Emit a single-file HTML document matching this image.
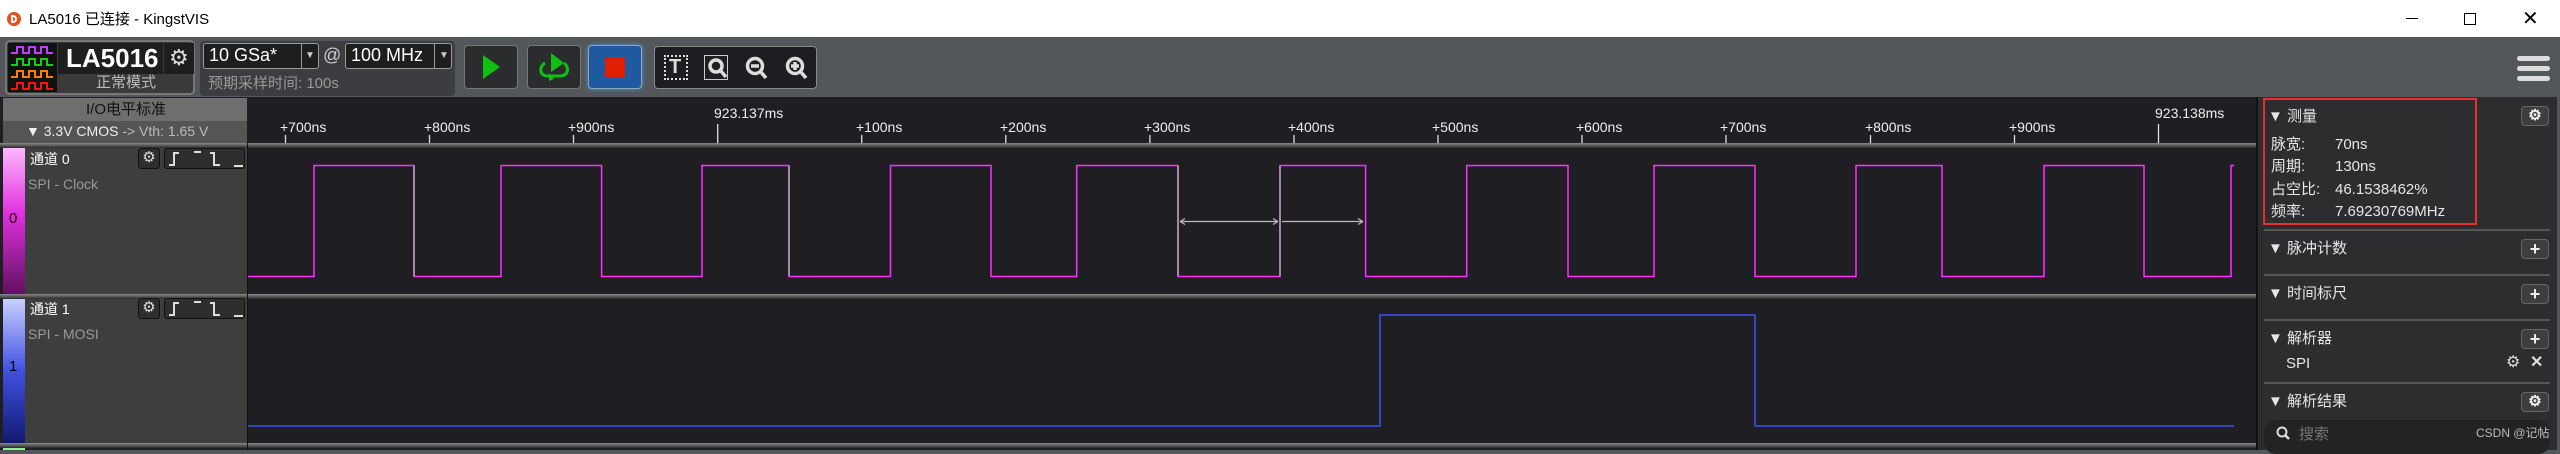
<!DOCTYPE html>
<html><head><meta charset="utf-8"><style>
*{margin:0;padding:0;box-sizing:border-box}
body{width:2560px;height:450px;overflow:hidden;background:#53575c;font-family:"Liberation Sans","Noto Sans CJK SC",sans-serif;position:relative;color:#ddd}
.a{position:absolute}
.t{position:absolute;white-space:nowrap;line-height:1.15}
.btn{position:absolute;border:1px solid #777;border-radius:4px;background:#2a2c2e}
.sep{position:absolute;height:5px;background:linear-gradient(#8a8a8a,#5a5a5a,#2a2a2a)}
.rp{font-size:15px;color:#e6e6e6}
.sq{position:absolute;width:28px;height:20px;border:1px solid #666;border-radius:4px;background:#3c3e40;color:#eee;font-size:18px;line-height:18px;text-align:center;font-weight:bold}
</style></head><body>
<!-- title bar -->
<div class="a" style="left:0;top:0;width:2560px;height:37px;background:#fff"></div>
<div class="a" style="left:7px;top:12px;width:14px;height:14px;border-radius:50%;background:#e8501e"></div>
<div class="a" style="left:11px;top:15px;width:6px;height:8px;border:2px solid #fff;border-radius:0 4px 4px 0"></div>
<div class="t" style="left:29px;top:11px;font-size:15px;color:#000">LA5016 已连接 - KingstVIS</div>
<div class="a" style="left:2406px;top:18px;width:12px;height:1px;background:#000"></div>
<div class="a" style="left:2464px;top:13px;width:12px;height:12px;border:1px solid #000"></div>
<div class="t" style="left:2522px;top:8px;font-size:20px;color:#000">✕</div>
<!-- toolbar -->
<div class="a" style="left:5px;top:40px;width:190px;height:55px;border:2px solid #777;border-radius:5px;background:#3a3a3a"></div>
<div class="a" style="left:8px;top:43px;width:49px;height:49px;background:#111"></div>
<svg class="a" style="left:8px;top:43px" width="49" height="49"><g fill="none" stroke-width="2">
<path d="M3 10H9V4H15V10H21V4H27V10H33V4H39V10H45" stroke="#c040ff"/>
<path d="M3 22H9V16H15V22H21V16H27V22H33V16H39V22H45" stroke="#10d010"/>
<path d="M3 34H9V28H15V34H21V28H27V34H33V28H39V34H45" stroke="#ff8000"/>
<path d="M3 46H9V40H15V46H21V40H27V46H33V40H39V46H45" stroke="#ff1010"/></g></svg>
<div class="a" style="left:58px;top:43px;width:105px;height:31px;background:#1e1e1e"></div>
<div class="t" style="left:66px;top:44px;font-size:26px;font-weight:bold;color:#fff">LA5016</div>
<div class="a" style="left:164px;top:43px;width:30px;height:31px;background:#1e1e1e"></div>
<div class="t" style="left:169px;top:45px;font-size:22px;color:#ddd">⚙</div>
<div class="t" style="left:96px;top:74px;font-size:15px;color:#bbb">正常模式</div>
<div class="a" style="left:200px;top:41px;width:255px;height:55px;background:#3b3d40;border-radius:4px"></div>
<div class="a" style="left:203px;top:43px;width:116px;height:26px;background:#1e1e1e;border:1px solid #999;border-radius:3px"></div>
<div class="t" style="left:209px;top:45px;font-size:18px;color:#fff">10 GSa*</div>
<div class="t" style="left:305px;top:50px;font-size:10px;color:#ccc">▼</div>
<div class="a" style="left:301px;top:44px;width:1px;height:24px;background:#999"></div>
<div class="t" style="left:323px;top:45px;font-size:18px;color:#ccc">@</div>
<div class="a" style="left:345px;top:43px;width:107px;height:26px;background:#1e1e1e;border:1px solid #999;border-radius:3px"></div>
<div class="t" style="left:351px;top:45px;font-size:18px;color:#fff">100 MHz</div>
<div class="t" style="left:439px;top:50px;font-size:10px;color:#ccc">▼</div>
<div class="a" style="left:434px;top:44px;width:1px;height:24px;background:#999"></div>
<div class="t" style="left:208px;top:75px;font-size:15px;color:#999">预期采样时间: 100s</div>
<div class="btn" style="left:464px;top:45px;width:54px;height:44px"></div>
<svg class="a" style="left:464px;top:45px" width="54" height="44"><path d="M19 10L36 22L19 34Z" fill="#10c010"/></svg>
<div class="btn" style="left:527px;top:45px;width:54px;height:44px"></div>
<svg class="a" style="left:527px;top:45px" width="54" height="44"><path d="M24 8L37 18L24 27Z" fill="#10c010"/><path d="M18 18C12 22 12 30 20 31H34C42 30 42 22 37 18" fill="none" stroke="#10c010" stroke-width="3"/><path d="M22 28L27 34L22 36Z" fill="#10c010"/></svg>
<div class="a" style="left:588px;top:45px;width:54px;height:44px;background:#1f5aa0;border:1px solid #8ab;border-radius:4px;box-shadow:0 0 5px #4a9ad8"></div>
<div class="a" style="left:605px;top:57px;width:20px;height:20px;background:#e01e00"></div>
<div class="a" style="left:654px;top:46px;width:163px;height:43px;background:#1e1e22;border:1px solid #888;border-radius:4px"></div>
<div class="a" style="left:664px;top:55px;width:24px;height:25px;border:2px dotted #ddd"></div>
<div class="t" style="left:669px;top:56px;font-size:20px;font-weight:bold;color:#ddd">T</div>
<div class="a" style="left:704px;top:55px;width:24px;height:25px;border:1px solid #ccc"></div>
<svg class="a" style="left:700px;top:52px" width="120" height="34"><g fill="none" stroke="#ddd" stroke-width="3.5"><circle cx="16" cy="14" r="6"/><path d="M20 18L26 25"/><circle cx="55" cy="14" r="7.5"/><path d="M60 19L66 26M51 14H59"/><circle cx="95" cy="14" r="7.5"/><path d="M100 19L106 26M91 14H99M95 10V18"/></g></svg>
<div class="a" style="left:2517px;top:56px;width:33px;height:5px;border-radius:3px;background:#ddd"></div>
<div class="a" style="left:2517px;top:66px;width:33px;height:5px;border-radius:3px;background:#ddd"></div>
<div class="a" style="left:2517px;top:76px;width:33px;height:5px;border-radius:3px;background:#ddd"></div>
<!-- main area -->
<div class="a" style="left:0;top:97px;width:2258px;height:353px;background:#1f1f23"></div>
<div class="a" style="left:3px;top:98px;width:244px;height:23px;background:#6e6e6e"></div>
<div class="t" style="left:86px;top:101px;font-size:15px;color:#111">I/O电平标准</div>
<div class="a" style="left:3px;top:121px;width:244px;height:22px;background:#555"></div>
<div class="t" style="left:26px;top:123px;font-size:14px;color:#eee">▼ 3.3V CMOS <span style="color:#bbb">-&gt; Vth: 1.65 V</span></div>
<div class="sep" style="left:0;top:143px;width:2258px"></div>
<!-- ruler -->
<svg class="a" style="left:0;top:98px" width="2258" height="46" font-family="Liberation Sans" font-size="14" fill="#eee">
<g stroke="#ddd" stroke-width="1.3">
<path d="M285.5 37V45M429.5 37V45M573.5 37V45M861.7 37V45M1005.8 37V45M1149.9 37V45M1294 37V45M1438 37V45M1582 37V45M1726 37V45M1870.5 37V45M2014.5 37V45M717.7 26V45M2158.5 26V45"/></g>
<text x="280" y="34">+700ns</text><text x="424" y="34">+800ns</text><text x="568" y="34">+900ns</text>
<text x="856" y="34">+100ns</text><text x="1000" y="34">+200ns</text><text x="1144" y="34">+300ns</text><text x="1288" y="34">+400ns</text><text x="1432" y="34">+500ns</text><text x="1576" y="34">+600ns</text><text x="1720" y="34">+700ns</text><text x="1865" y="34">+800ns</text><text x="2009" y="34">+900ns</text>
<text x="714" y="20">923.137ms</text><text x="2155" y="20">923.138ms</text>
</svg>
<!-- channel 0 -->
<div class="a" style="left:3px;top:148px;width:22px;height:146px;background:linear-gradient(#fcb8fc,#e030e0 45%,#601060)"></div>
<div class="t" style="left:9px;top:210px;font-size:15px;color:#300">0</div>
<div class="a" style="left:25px;top:148px;width:222px;height:146px;background:#3e3e3e"></div>
<div class="t" style="left:30px;top:151px;font-size:14px;color:#fff">通道 0</div>
<div class="t" style="left:28px;top:176px;font-size:14px;color:#999">SPI - Clock</div>
<div class="a" style="left:138px;top:148px;width:22px;height:21px;border:1px solid #111;border-radius:3px;background:#2e2e2e;color:#ddd;font-size:15px;text-align:center;line-height:18px">⚙</div>
<div class="a" style="left:164px;top:148px;width:81px;height:21px;border:1px solid #111;border-radius:3px;background:#2e2e2e"></div>
<svg class="a" style="left:164px;top:148px" width="81" height="21"><g fill="none" stroke="#ddd" stroke-width="2"><path d="M5 17H10V5H15M30 4H37M46 5H50V17H56M70 18H79"/></g></svg>
<div class="sep" style="left:0;top:294px;width:2258px"></div>
<!-- channel 1 -->
<div class="a" style="left:3px;top:299px;width:22px;height:145px;background:linear-gradient(#c8d0ff,#4050e0 50%,#101a70)"></div>
<div class="t" style="left:9px;top:358px;font-size:15px;color:#002">1</div>
<div class="a" style="left:25px;top:299px;width:222px;height:145px;background:#3e3e3e"></div>
<div class="t" style="left:30px;top:301px;font-size:14px;color:#fff">通道 1</div>
<div class="t" style="left:28px;top:326px;font-size:14px;color:#999">SPI - MOSI</div>
<div class="a" style="left:138px;top:298px;width:22px;height:21px;border:1px solid #111;border-radius:3px;background:#2e2e2e;color:#ddd;font-size:15px;text-align:center;line-height:18px">⚙</div>
<div class="a" style="left:164px;top:298px;width:81px;height:21px;border:1px solid #111;border-radius:3px;background:#2e2e2e"></div>
<svg class="a" style="left:164px;top:298px" width="81" height="21"><g fill="none" stroke="#ddd" stroke-width="2"><path d="M5 17H10V5H15M30 4H37M46 5H50V17H56M70 18H79"/></g></svg>
<div class="sep" style="left:0;top:443px;width:2258px"></div>
<div class="a" style="left:3px;top:448px;width:22px;height:2px;background:#90f090"></div>
<div class="a" style="left:247px;top:143px;width:1px;height:307px;background:#111"></div>
<!-- waveforms -->
<svg class="a" style="left:0;top:0" width="2258" height="450">
<path d="M248 276.5H314V165.5H414V276.5H501V165.5H601.6V276.5H702V165.5H789V276.5H890.5V165.5H991V276.5H1076.7V165.5H1178V276.5H1280V165.5H1365.6V276.5H1466.7V165.5H1568V276.5H1654V165.5H1755V276.5H1856V165.5H1942V276.5H2044V165.5H2144V276.5H2231V165.5H2234" fill="none" stroke="#ff30ff" stroke-width="1.5"/>
<path d="M414 166V276M789 166V276M1178 166V276M1280 166V276" stroke="#aaa" stroke-width="1.5"/>
<path d="M1180 221.5H1278M1282 221.5H1363M1180 221.5l5 -3M1180 221.5l5 3M1278 221.5l-5 -3M1278 221.5l-5 3M1363 221.5l-5 -3M1363 221.5l-5 3" stroke="#bbb" stroke-width="1.2"/>
<path d="M248 426H1380V315H1755V426H2234" fill="none" stroke="#4050f0" stroke-width="1.5"/>
</svg>
<!-- right panel -->
<div class="a" style="left:2256px;top:97px;width:301px;height:353px;background:#2d2d2f;border-left:2px solid #111"></div>
<div class="a" style="left:2263px;top:98px;width:214px;height:127px;border:2px solid #e83030"></div>
<div class="t rp" style="left:2268px;top:108px">▼ 测量</div>
<div class="t rp" style="left:2271px;top:136px">脉宽:</div><div class="t rp" style="left:2335px;top:136px">70ns</div>
<div class="t rp" style="left:2271px;top:158px">周期:</div><div class="t rp" style="left:2335px;top:158px">130ns</div>
<div class="t rp" style="left:2271px;top:181px">占空比:</div><div class="t rp" style="left:2335px;top:181px">46.1538462%</div>
<div class="t rp" style="left:2271px;top:203px">频率:</div><div class="t rp" style="left:2335px;top:203px">7.69230769MHz</div>
<div class="sq" style="left:2521px;top:106px;font-size:15px">⚙</div>
<div class="a" style="left:2264px;top:229px;width:286px;height:2px;background:#555"></div>
<div class="t rp" style="left:2268px;top:240px">▼ 脉冲计数</div><div class="sq" style="left:2521px;top:239px">+</div>
<div class="a" style="left:2264px;top:274px;width:286px;height:2px;background:#555"></div>
<div class="t rp" style="left:2268px;top:285px">▼ 时间标尺</div><div class="sq" style="left:2521px;top:284px">+</div>
<div class="a" style="left:2264px;top:319px;width:286px;height:2px;background:#555"></div>
<div class="t rp" style="left:2268px;top:330px">▼ 解析器</div><div class="sq" style="left:2521px;top:329px">+</div>
<div class="t rp" style="left:2286px;top:355px">SPI</div>
<div class="t" style="left:2506px;top:354px;font-size:16px;color:#ddd">⚙</div>
<div class="t" style="left:2530px;top:354px;font-size:16px;color:#ddd;font-weight:bold">✕</div>
<div class="a" style="left:2264px;top:382px;width:286px;height:2px;background:#555"></div>
<div class="t rp" style="left:2268px;top:393px">▼ 解析结果</div><div class="sq" style="left:2521px;top:392px;font-size:15px">⚙</div>
<div class="a" style="left:2264px;top:420px;width:286px;height:34px;border-radius:12px;background:#232325"></div>
<svg class="a" style="left:2276px;top:426px" width="16" height="16"><circle cx="6" cy="6" r="4.5" fill="none" stroke="#ddd" stroke-width="2"/><path d="M9 9L13 13" stroke="#ddd" stroke-width="2.5"/></svg>
<div class="t" style="left:2299px;top:426px;font-size:15px;color:#777">搜索</div>
<div class="t" style="left:2476px;top:427px;font-size:12px;color:#bbb">CSDN @记帖</div>
</body></html>
